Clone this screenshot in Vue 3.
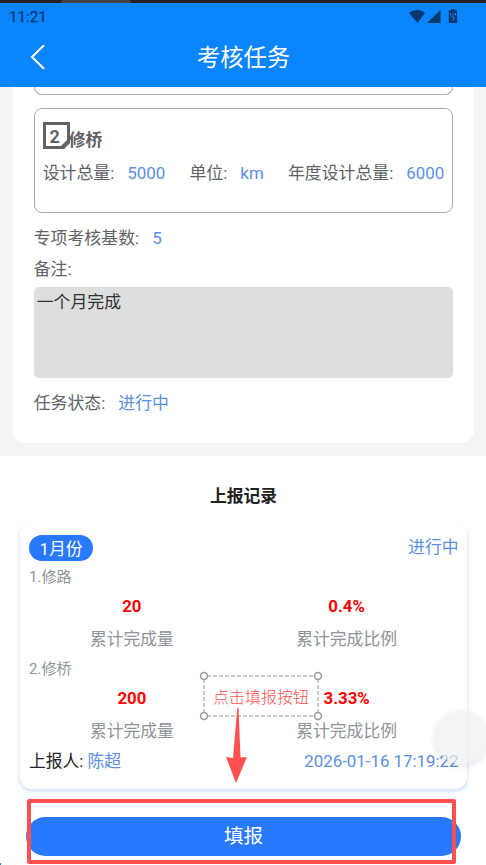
<script setup>
const summary = [
  { label: '设计总量:', value: '5000' },
  { label: '单位:', value: 'km' },
  { label: '年度设计总量:', value: '6000' },
]

const records = [
  { name: '1.修路', amount: '20', ratio: '0.4%' },
  { name: '2.修桥', amount: '200', ratio: '3.33%' },
]
</script>

<template>
  <div class="screen">
    <header class="header">
      <div class="notch-strip"><span class="notch"></span></div>
      <div class="status-bar">
        <span class="clock">11:21</span>
        <svg class="status-icons" width="50" height="16" viewBox="0 0 50 16">
          <path d="M0 4C4.4-.1 11.6-.1 16 4L8.5 14z" />
          <path d="M31.5 1v13H18z" />
          <path d="M42.3 0h3.4v1.2h2.4v12.8h-8.4V1.2h2.6z" />
          <path class="bolt" d="M41.5 4v2.5M46.5 4v2.5M44.5 4.2l-1.5 4h2.4l-1.4 3.6" />
        </svg>
      </div>
      <div class="nav">
        <svg class="back" width="16" height="26" viewBox="0 0 16 26">
          <path d="M14 1.2L2 13l12 11.8" />
        </svg>
        <h1>考核任务</h1>
      </div>
    </header>

    <section class="detail">
      <div class="panel">
        <div class="item item-prev"></div>
        <div class="item item-current">
          <div class="item-title">
            <span class="index">
              <svg width="28" height="28" viewBox="0 0 28 28">
                <path d="M1.5 1.5h24v18.5L20 25.5H1.5z" />
                <path class="corner" d="M27 17v4l-6 6h-4v-2l8-8z" />
              </svg>
              <b>2</b>
            </span>
            <strong>修桥</strong>
          </div>
          <div class="summary">
            <span v-for="s in summary" :key="s.label" class="pair">
              {{ s.label }}<em>{{ s.value }}</em>
            </span>
          </div>
        </div>
        <div class="line base">专项考核基数:<em>5</em></div>
        <div class="line remark-label">备注:</div>
        <div class="remark">一个月完成</div>
        <div class="line state">任务状态:<em>进行中</em></div>
      </div>
    </section>

    <section class="report">
      <h2>上报记录</h2>
      <div class="card">
        <div class="card-head">
          <span class="month">1月份</span>
          <span class="blue">进行中</span>
        </div>
        <div v-for="r in records" :key="r.name" class="record">
          <div class="record-name">{{ r.name }}</div>
          <div class="stats">
            <div class="stat"><b>{{ r.amount }}</b><span>累计完成量</span></div>
            <div class="stat"><b>{{ r.ratio }}</b><span>累计完成比例</span></div>
          </div>
        </div>
        <div class="card-foot">
          <span>上报人: <span class="blue">陈超</span></span>
          <span class="blue time">2026-01-16 17:19:22</span>
        </div>
      </div>
      <button class="submit">填报</button>
    </section>

    <div class="float-ball"></div>
    <div class="note">
      <svg width="126" height="114" viewBox="0 0 126 114">
        <path class="dash" d="M9 6H119M9 46H119M6 9V43M120 9V43" />
        <circle cx="6" cy="6" r="3.5" />
        <circle cx="120" cy="6" r="3.5" />
        <circle cx="6" cy="46" r="3.5" />
        <circle cx="120" cy="46" r="3.5" />
        <path class="arrow" d="M39.3 38h1.2L42.5 87.5l6.5-.5L38 113 28 87l7 1z" />
      </svg>
      <span>点击填报按钮</span>
    </div>
    <div class="highlight"></div>
    <div class="edge-dot"></div>
  </div>
</template>

<style>
body {
  margin: 0;
  overflow: hidden;
}
</style>

<style scoped>
.screen {
  position: relative;
  width: 486px;
  height: 865px;
  overflow: hidden;
  background: #fff;
  font-family: Roboto, "Noto Sans CJK SC", sans-serif;
  font-size: 16.8px;
  line-height: 24px;
  color: #606266;
}
.screen * {
  box-sizing: border-box;
}
em {
  font-style: normal;
  color: #5b8fe3;
  margin-left: 13px;
}
.blue {
  color: #5b8fe3;
}
.header {
  height: 87px;
  background: #0b84ff;
}
.notch-strip {
  height: 3px;
  background: #222;
  display: flex;
}
.notch {
  width: 70px;
  margin-left: 61px;
  background: #444;
  border-radius: 6px 6px 0 0;
}
.status-bar {
  height: 26px;
  display: flex;
  justify-content: space-between;
  padding: 0 27px 0 9px;
  color: #07386c;
}
.clock {
  font-size: 15.2px;
  font-weight: 400;
  line-height: 28px;
  -webkit-text-stroke: 0.25px #07386c;
}
.status-icons {
  margin-top: 6px;
  fill: #07386c;
}
.bolt {
  fill: none;
  stroke: #0b84ff;
  stroke-width: 1;
}
.nav {
  height: 56px;
  display: flex;
  align-items: center;
  padding: 0 30px;
}
.back {
  fill: none;
  stroke: #fff;
  stroke-width: 2;
}
h1 {
  flex: 1;
  margin: 2px 15px 0 0;
  text-align: center;
  font-size: 23.3px;
  font-weight: 400;
  line-height: 34px;
  color: #fff;
}
.detail {
  height: 368.5px;
  background: #f4f4f4;
  padding: 0 12px 13px 13px;
}
.panel {
  height: 100%;
  background: #fff;
  border-radius: 0 0 13px 13px;
  padding: 0 20.7px;
  font-size: 16.9px;
}
.item {
  border: 1px solid #aaa;
}
.item-prev {
  height: 8px;
  border-top: 0;
  border-radius: 0 0 8px 8px;
}
.item-current {
  height: 105px;
  margin-top: 13px;
  border-radius: 8px;
  padding: 13px 8px 0;
}
.item-title {
  display: flex;
  height: 28px;
}
.index {
  display: grid;
  width: 26px;
  height: 28px;
}
.index > * {
  grid-area: 1 / 1;
}
.index svg {
  fill: none;
  stroke: #606266;
  stroke-width: 3;
}
.index .corner {
  fill: #606266;
  stroke: none;
}
.index b {
  width: 24px;
  text-align: center;
  font-size: 18px;
  line-height: 29px;
}
.item-title strong {
  font-size: 16.8px;
  line-height: 37px;
}
.summary {
  display: flex;
  justify-content: space-between;
  margin-top: 11px;
  white-space: nowrap;
}
.base {
  margin-top: 13px;
}
.remark-label {
  margin-top: 7px;
}
.remark {
  height: 91px;
  margin-top: 6px;
  border-radius: 5px;
  background: #dedede;
  color: #303133;
  padding: 3px;
}
.state {
  margin-top: 13px;
}
.report {
  padding: 28.5px 19px 0 20px;
}
h2 {
  margin: 0;
  text-align: center;
  font-size: 16.8px;
  line-height: 24px;
  color: #222;
}
.card {
  height: 267px;
  margin-top: 14px;
  padding: 13px 8.5px 0 9px;
  border-radius: 12px;
  background: #fff;
  box-shadow: 0 2px 3px 1px #d9e6fd;
  color: #222;
}
.card-head,
.card-foot {
  display: flex;
  justify-content: space-between;
}
.month {
  width: 64px;
  height: 26px;
  line-height: 28px;
  border-radius: 13px;
  text-align: center;
  background: #2979ff;
  color: #fff;
}
.record {
  height: 91.5px;
}
.record-name {
  padding-top: 4px;
  font-size: 15px;
  line-height: 25px;
  color: #909399;
}
.stats {
  display: flex;
  margin: 4px 4.5px 0 -4.5px;
}
.stat {
  flex: 1;
  text-align: center;
}
.stat b,
.stat span {
  display: block;
}
.stat b {
  color: #f00;
}
.stat span {
  margin-top: 9px;
  color: #909399;
}
.card-foot {
  margin-top: 5px;
}
.time {
  font-size: 16.85px;
}
.submit {
  display: block;
  width: 435px;
  height: 39px;
  margin: 28px 0 0 6px;
  padding: 0;
  border: 0;
  border-radius: 20px;
  background: #2979ff;
  color: #fff;
  font: inherit;
  font-size: 19.6px;
  line-height: 39px;
}
.float-ball {
  position: absolute;
  left: 435px;
  top: 711px;
  width: 53px;
  height: 53px;
  border-radius: 50%;
  background: rgba(240, 240, 240, 0.7);
  box-shadow: 0 2px 7px rgba(0, 0, 0, 0.12);
}
.note {
  position: absolute;
  left: 198px;
  top: 670px;
  display: grid;
}
.note > * {
  grid-area: 1 / 1;
}
.note svg {
  fill: #fff;
  stroke: #999;
  stroke-width: 1.5;
}
.note .dash {
  fill: none;
  stroke: #bbb;
  stroke-dasharray: 4 2;
}
.note .arrow {
  fill: #ff5050;
  stroke: none;
}
.note span {
  text-align: center;
  font-size: 16px;
  font-weight: 300;
  line-height: 55px;
  color: #ff5050;
}
.highlight {
  position: absolute;
  left: 27px;
  top: 799px;
  width: 429px;
  height: 65px;
  border: 4px solid #ff5050;
  border-radius: 2px;
}
.edge-dot {
  position: absolute;
  left: 0;
  top: 863px;
  width: 1px;
  height: 2px;
  background: #0b84ff;
}
</style>
